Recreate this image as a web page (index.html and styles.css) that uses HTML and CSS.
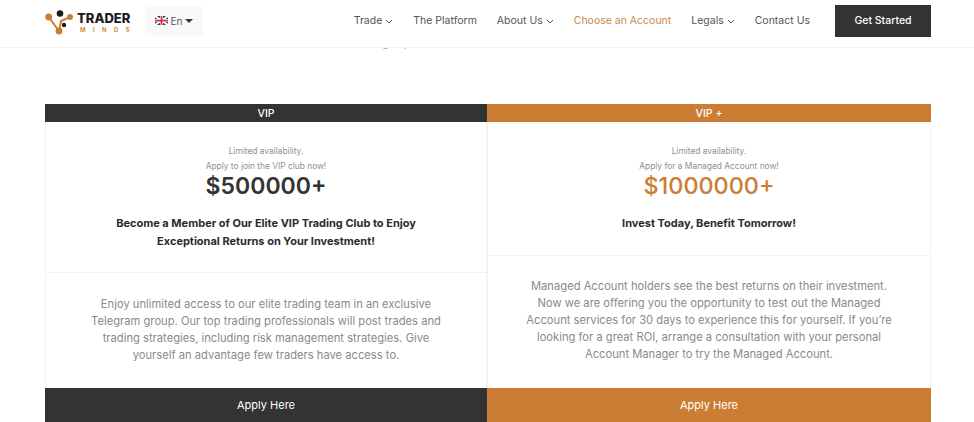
FILE: index.html
```html
<!DOCTYPE html>
<html lang="en">
<head>
  <meta charset="UTF-8">
  <title>Choose an Account - Trader Minds</title>
  <link rel="stylesheet" href="styles.css">
</head>
<body>

<header class="cabecera">
  <a class="logo" href="#">
    <svg class="logo-icono" width="30" height="28" viewBox="0 0 30 28">
      <path d="M3.7 10 L14 24 L16 14 L25 10" fill="none" stroke="#cb7d33" stroke-width="2"/>
      <circle cx="3.7" cy="10" r="3.4" fill="#cb7d33"/>
      <circle cx="25" cy="10" r="3" fill="#cb7d33"/>
      <circle cx="14" cy="24" r="3.4" fill="#cb7d33"/>
      <circle cx="15" cy="6.5" r="3.3" fill="#1c1c1c"/>
      <circle cx="19" cy="18" r="2.2" fill="#1c1c1c"/>
    </svg>
    <span class="logo-texto">
      <span class="logo-trader">TRADER</span>
      <span class="logo-minds">MINDS</span>
    </span>
  </a>

  <div class="idioma">
    <svg width="13" height="9" viewBox="0 0 26 18">
      <rect width="26" height="18" fill="#2b3a7a"/>
      <path d="M0 0 L26 18 M26 0 L0 18" stroke="#fff" stroke-width="4"/>
      <path d="M13 0 V18 M0 9 H26" stroke="#fff" stroke-width="6"/>
      <path d="M13 0 V18 M0 9 H26" stroke="#d0303c" stroke-width="3.5"/>
    </svg>
    <span>En</span>
    <span class="flecha-idioma"></span>
  </div>

  <nav class="menu">
    <a href="#">Trade <svg class="chevron" viewBox="0 0 8 5"><path d="M1 1 L4 4 L7 1"/></svg></a>
    <a href="#">The Platform</a>
    <a href="#">About Us <svg class="chevron" viewBox="0 0 8 5"><path d="M1 1 L4 4 L7 1"/></svg></a>
    <a class="activo" href="#">Choose an Account</a>
    <a href="#">Legals <svg class="chevron" viewBox="0 0 8 5"><path d="M1 1 L4 4 L7 1"/></svg></a>
    <a href="#">Contact Us</a>
  </nav>

  <a class="boton-inicio" href="#">Get Started</a>
</header>

<p class="intro">g ,</p>

<main class="planes">
  <section class="plan">
    <h2 class="plan-titulo">VIP</h2>
    <div class="plan-top">
      <p class="nota">Limited availability.</p>
      <p class="nota">Apply to join the VIP club now!</p>
      <p class="precio">$500000+</p>
      <h3>Become a Member of Our Elite VIP Trading Club to Enjoy<br>Exceptional Returns on Your Investment!</h3>
    </div>
    <p class="descripcion">Enjoy unlimited access to our elite trading team in an exclusive<br>Telegram group. Our top trading professionals will post trades and<br>trading strategies, including risk management strategies. Give<br>yourself an advantage few traders have access to.</p>
    <a class="aplicar" href="#">Apply Here</a>
  </section>

  <section class="plan plan-naranja">
    <h2 class="plan-titulo">VIP +</h2>
    <div class="plan-top">
      <p class="nota">Limited availability.</p>
      <p class="nota">Apply for a Managed Account now!</p>
      <p class="precio">$1000000+</p>
      <h3>Invest Today, Benefit Tomorrow!</h3>
    </div>
    <p class="descripcion">Managed Account holders see the best returns on their investment.<br>Now we are offering you the opportunity to test out the Managed<br>Account services for 30 days to experience this for yourself. If you’re<br>looking for a great ROI, arrange a consultation with your personal<br>Account Manager to try the Managed Account.</p>
    <a class="aplicar" href="#">Apply Here</a>
  </section>
</main>

</body>
</html>
```

FILE: styles.css
```css
html, body {
  height: 100vh;
  overflow: hidden;
}

body {
  margin: 0;
  font-family: Inter, 'Liberation Sans', sans-serif;
  background-color: #ffffff;
  color: #333333;
}

a {
  text-decoration: none;
  color: inherit;
}

p, h2, h3 {
  margin: 0;
}

.cabecera {
  position: relative;
  z-index: 2;
  display: flex;
  align-items: center;
  height: 41px;
  padding: 0 43px 6px 45px;
  background-color: #ffffff;
  border-bottom: 1px solid #f0f0f0;
}

.logo {
  display: flex;
  align-items: center;
  gap: 2px;
  width: 100px;
}

.logo-icono {
  flex: none;
}

.logo-texto {
  display: flex;
  flex-direction: column;
  margin-top: 2px;
}

.logo-trader {
  font-size: 13px;
  line-height: 15px;
  font-weight: 800;
  color: #1c1c1c;
}

.logo-minds {
  padding-left: 3px;
  font-size: 6px;
  line-height: 7px;
  font-weight: 600;
  letter-spacing: 7.4px;
  color: #cb7d33;
}

.idioma {
  display: flex;
  align-items: center;
  justify-content: center;
  gap: 3px;
  width: 58px;
  height: 30px;
  border-radius: 4px;
  background-color: #f9f9f8;
  font-size: 10px;
  color: #555555;
}

.flecha-idioma {
  width: 0;
  height: 0;
  border-left: 4px solid transparent;
  border-right: 4px solid transparent;
  border-top: 4px solid #333333;
}

.menu {
  display: flex;
  align-items: center;
  gap: 20px;
  margin-left: auto;
  margin-right: 25px;
  font-size: 10.5px;
  color: #555555;
}

.menu .activo {
  color: #c98a4f;
}

.chevron {
  width: 8px;
  height: 5px;
  fill: none;
  stroke: #555555;
  stroke-width: 1;
}

.boton-inicio {
  display: flex;
  align-items: center;
  justify-content: center;
  width: 96px;
  height: 32px;
  background-color: #333333;
  color: #ffffff;
  font-size: 10.5px;
  font-weight: 500;
}

/* solo asoman los rabos de las letras bajo la cabecera */
.intro {
  position: relative;
  z-index: 1;
  margin-top: -11px;
  padding-right: 185px;
  height: 13px;
  line-height: 13px;
  font-size: 11px;
  word-spacing: 12px;
  text-align: center;
  color: #999999;
}

.planes {
  display: grid;
  grid-template-columns: 442px 444px;
  margin: 54px 0 0 45px;
  width: 886px;
}

.plan {
  display: flex;
  flex-direction: column;
  height: 318px;
  border-left: 1px solid #f3f3f3;
  border-right: 1px solid #f3f3f3;
  box-sizing: border-box;
  text-align: center;
}

.plan-titulo {
  height: 18px;
  margin: 0 -1px;
  background-color: #333333;
  color: #ffffff;
  font-size: 10.5px;
  line-height: 19px;
  font-weight: 500;
}

.plan-naranja .plan-titulo,
.plan-naranja .aplicar {
  background-color: #cb7d33;
}

.plan-naranja .precio {
  color: #cb7d33;
  font-weight: 500;
  font-size: 23.4px;
}

.plan-top {
  padding: 22px 0;
  border-bottom: 1px solid #f1f1f1;
}

.plan-naranja .plan-top {
  padding-bottom: 23px;
}

.nota {
  font-size: 8.4px;
  line-height: 15px;
  color: #8f8f8f;
}

.precio {
  margin-bottom: 16px;
  font-size: 23px;
  line-height: 24px;
  font-weight: 600;
  color: #333333;
}

h3 {
  font-size: 11px;
  line-height: 18px;
  font-weight: 700;
  color: #2b2b2b;
}

.descripcion {
  flex: 1;
  padding-top: 23px;
  font-size: 11.2px;
  line-height: 17px;
  color: #8a8a8a;
}

.plan-naranja .descripcion {
  padding-top: 22px;
}

.aplicar {
  display: block;
  height: 34px;
  margin: 0 -1px;
  background-color: #333333;
  color: #ffffff;
  font-size: 11px;
  line-height: 34px;
  font-weight: 400;
}
```
